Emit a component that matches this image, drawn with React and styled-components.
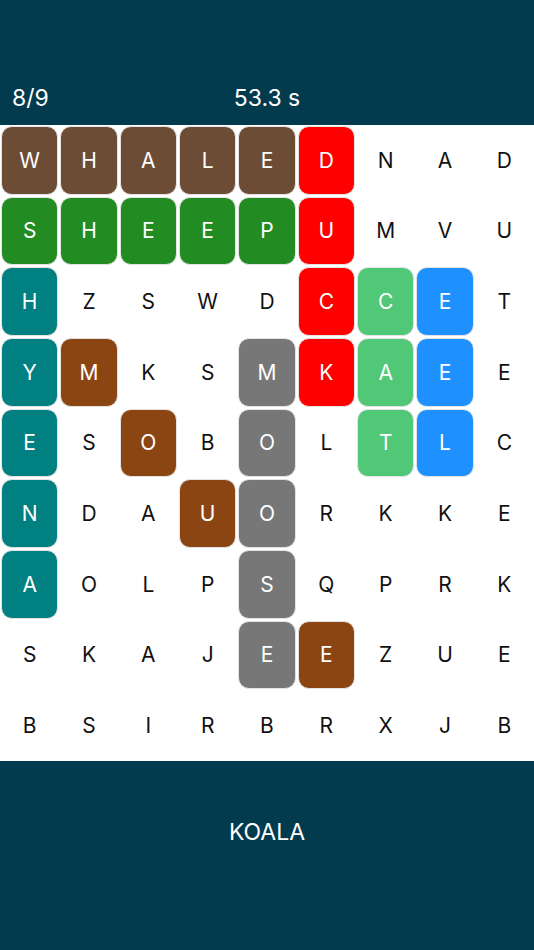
import React from 'react'
import styled, { createGlobalStyle } from 'styled-components'

const GlobalStyle = createGlobalStyle`
    html, body {
        margin: 0;
        padding: 0;
        background: #023a4e;
    }
    body {
        font-family: Inter, "Liberation Sans", sans-serif;
    }
`

const letters = [
    'WHALEDNAD',
    'SHEEPUMVU',
    'HZSWDCCET',
    'YMKSMKAEE',
    'ESOBOLTLC',
    'NDAUORKKE',
    'AOLPSQPRK',
    'SKAJEEZUE',
    'BSIRBRXJB',
]

const colors = {
    whale: '#6d4c36',
    sheep: '#228b22',
    duck: '#ff0000',
    hyena: '#008080',
    mouse: '#8b4513',
    moose: '#777777',
    cat: '#50c878',
    eel: '#1e90ff',
}

const found = {
    whale: [[0, 0], [0, 1], [0, 2], [0, 3], [0, 4]],
    sheep: [[1, 0], [1, 1], [1, 2], [1, 3], [1, 4]],
    duck: [[0, 5], [1, 5], [2, 5], [3, 5]],
    hyena: [[2, 0], [3, 0], [4, 0], [5, 0], [6, 0]],
    mouse: [[3, 1], [4, 2], [5, 3], [6, 4], [7, 5]],
    moose: [[3, 4], [4, 4], [5, 4], [6, 4], [7, 4]],
    cat: [[2, 6], [3, 6], [4, 6]],
    eel: [[2, 7], [3, 7], [4, 7]],
}

// mouse & moose share the S at row 6 — the grey one sits on top
const cellColor = {}
Object.keys(found).forEach(word => {
    found[word].forEach(([r, c]) => {
        cellColor[`${r}-${c}`] = colors[word]
    })
})

export default function App() {
    return (
        <Screen>
            <GlobalStyle />
            <Header>
                <Score>8/9</Score>
                <Timer>53.3 s</Timer>
                <span />
            </Header>
            <Board>
                {letters.map((row, r) =>
                    row.split('').map((ch, c) => {
                        const bg = cellColor[`${r}-${c}`]
                        return (
                            <Cell key={`${r}-${c}`}>
                                {bg ? <Tile bg={bg}>{ch}</Tile> : <Letter>{ch}</Letter>}
                            </Cell>
                        )
                    })
                )}
            </Board>
            <Footer>
                <Target>KOALA</Target>
            </Footer>
        </Screen>
    )
}

const Screen = styled.div`
    width: 534px;
    height: 950px;
    display: flex;
    flex-direction: column;
    background: #023a4e;
    color: #fff;
`
const Header = styled.div`
    height: 125px;
    box-sizing: border-box;
    padding: 0 12px 13px;
    display: grid;
    grid-template-columns: 1fr auto 1fr;
    align-items: end;
    font-size: 23px;
    line-height: 28px;
`
const Score = styled.span`
    justify-self: start;
`
const Timer = styled.span`
    justify-self: center;
`
const Board = styled.div`
    background: #fff;
    display: grid;
    grid-template-columns: repeat(9, 1fr);
    grid-template-rows: repeat(9, 70.67px);
`
const Cell = styled.div`
    padding: 1px;
    display: flex;
`
const Letter = styled.div`
    flex: 1;
    display: flex;
    align-items: center;
    justify-content: center;
    color: #111;
    font-size: 21px;
`
const Tile = styled(Letter)`
    background: ${props => props.bg};
    color: #fff;
    border: 1px solid #e3e3e3;
    border-radius: 11px;
`
const Footer = styled.div`
    flex: 1;
    display: flex;
    justify-content: center;
    padding-top: 57px;
`
const Target = styled.div`
    font-size: 23px;
    line-height: 28px;
    height: 28px;
`
